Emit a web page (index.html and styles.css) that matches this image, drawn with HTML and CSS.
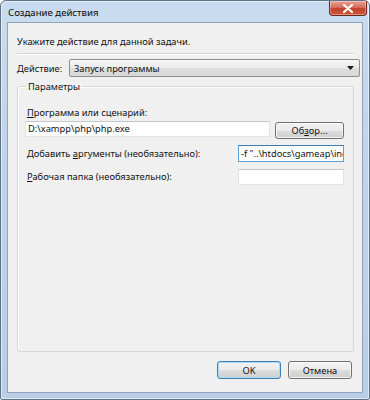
FILE: index.html
```html
<!DOCTYPE html>
<html lang="ru">
<head>
<meta charset="utf-8">
<title>Создание действия</title>
<link rel="stylesheet" href="styles.css">
</head>
<body>
<div class="window">
  <div class="titlebar">
    <span class="title">Создание действия</span>
    <div class="close">
      <svg width="12" height="9" viewBox="0 0 12 9"><path d="M2 1 L10 8 M10 1 L2 8" stroke="#ffffff" stroke-width="2.2" stroke-linecap="round"/></svg>
    </div>
  </div>
  <div class="client">
    <div class="instruction">Укажите действие для данной задачи.</div>
    <div class="separator"></div>
    <div class="action-row">
      <span class="label"><u>Д</u>ействие:</span>
      <div class="select">
        <span>Запуск программы</span>
        <svg width="7" height="4" viewBox="0 0 7 4"><path d="M0 0 H7 L3.5 4 Z" fill="#1a1a1a"/></svg>
      </div>
    </div>
    <fieldset class="group">
      <legend>Параметры</legend>
      <div class="field-label"><u>П</u>рограмма или сценарий:</div>
      <div class="program-row">
        <div class="textbox wide">D:\xampp\php\php.exe</div>
        <div class="button browse">Об<u>з</u>ор...</div>
      </div>
      <div class="param-row args">
        <span class="field-label inline">Добавить <u>а</u>ргументы (необязательно):</span>
        <div class="textbox short focused">-f "..\htdocs\gameap\index.php"</div>
      </div>
      <div class="param-row folder">
        <span class="field-label inline"><u>Р</u>абочая папка (необязательно):</span>
        <div class="textbox short"></div>
      </div>
    </fieldset>
    <div class="buttons">
      <div class="button default">OK</div>
      <div class="button">Отмена</div>
    </div>
  </div>
</div>
</body>
</html>
```
FILE: styles.css
```css
html, body {
  margin: 0;
  padding: 0;
  background: #ffffff;
}
body {
  font-family: "Noto Sans", "Open Sans", sans-serif;
  font-size: 9.3px;
  color: #111111;
}
.window {
  width: 370px;
  height: 400px;
  box-sizing: border-box;
  border: 1px solid #5f7389;
  border-radius: 6px 6px 2px 2px;
  background: linear-gradient(180deg, #c9dcef 0%, #bed4ea 40%, #b8cfe7 100%);
  box-shadow: inset 0 0 0 1px rgba(255,255,255,0.55);
  padding: 0 6px 6px 6px;
  display: flex;
  flex-direction: column;
}
.titlebar {
  height: 21px;
  display: flex;
  align-items: center;
  justify-content: space-between;
  position: relative;
}
.title {
  padding-left: 1px;
  font-size: 9.6px;
  color: #0a0a0a;
  margin-top: 1px;
}
.close {
  width: 38px;
  height: 15px;
  margin-top: -6px;
  margin-right: -4px;
  box-sizing: border-box;
  border: 1px solid #6b2a20;
  border-top: none;
  border-radius: 0 0 4px 4px;
  background: linear-gradient(180deg, #e7a396 0%, #d6705d 45%, #c0402a 55%, #cf5a3c 100%);
  box-shadow: inset 0 0 0 1px rgba(255,255,255,0.35);
  display: flex;
  align-items: center;
  justify-content: center;
}
.client {
  flex: 1;
  background: #f0f0f0;
  border: 1px solid #8fa4bb;
  display: flex;
  flex-direction: column;
  padding: 11px 8px 13px 9px;
}
.instruction {
  line-height: 16px;
}
.separator {
  height: 0;
  border-top: 1px solid #d6d6d6;
  border-bottom: 1px solid #ffffff;
  margin-top: 3px;
}
.action-row {
  display: flex;
  align-items: center;
  margin-top: 4px;
  height: 18px;
}
.label {
  width: 52px;
}
u {
  text-decoration: underline;
  text-underline-offset: 1px;
}
.select {
  flex: 1;
  margin-right: -6px;
  height: 18px;
  box-sizing: border-box;
  border: 1px solid #8c8e90;
  border-radius: 2px;
  background: linear-gradient(180deg, #f6f6f6 0%, #ebebeb 50%, #dddddd 51%, #d8d8d8 100%);
  display: flex;
  align-items: center;
  justify-content: space-between;
  padding: 0 5px 0 4px;
}
.group {
  flex: 1;
  margin: 3px 0 0 0;
  padding: 12px 9px 0 7px;
  border: 1px solid #d3d8dc;
  border-radius: 3px;
  box-shadow: inset 1px 1px 0 #ffffff;
  min-width: 0;
}
.group legend {
  padding: 0 2px;
  margin-left: 1px;
  line-height: 13px;
}
.field-label {
  line-height: 16px;
  padding-left: 2px;
}
.field-label.inline {
  flex: 1;
}
.program-row {
  display: flex;
  align-items: flex-start;
  gap: 5px;
}
.textbox {
  height: 16px;
  box-sizing: border-box;
  background: #ffffff;
  border: 1px solid #e0e3e8;
  border-top-color: #c5c8cd;
  padding: 0 2px;
  line-height: 14px;
  white-space: nowrap;
  overflow: hidden;
}
.textbox.wide {
  flex: 1;
}
.textbox.short {
  width: 106px;
}
.textbox.focused {
  height: 17px;
  line-height: 15px;
  border-color: #5fa3d8;
  border-top-color: #3d7bad;
}
.button {
  box-sizing: border-box;
  height: 17px;
  border: 1px solid #707070;
  border-radius: 3px;
  background: linear-gradient(180deg, #f2f2f2 0%, #ebebeb 50%, #dddddd 51%, #cfcfcf 100%);
  box-shadow: inset 0 0 0 1px rgba(255,255,255,0.7);
  display: flex;
  align-items: center;
  justify-content: center;
  line-height: 15px;
}
.browse {
  width: 69px;
  margin-top: 1px;
}
.param-row {
  display: flex;
  align-items: center;
}
.param-row.args {
  margin-top: 6px;
}
.param-row.folder {
  margin-top: 7px;
}
.buttons {
  display: flex;
  justify-content: flex-end;
  gap: 7px;
  margin-top: 9px;
  padding-right: 2px;
}
.buttons .button {
  width: 64px;
  height: 18px;
}
.buttons .default {
  border-color: #3c7fb1;
  box-shadow: inset 0 0 0 1px #a9dcf6;
}
```
